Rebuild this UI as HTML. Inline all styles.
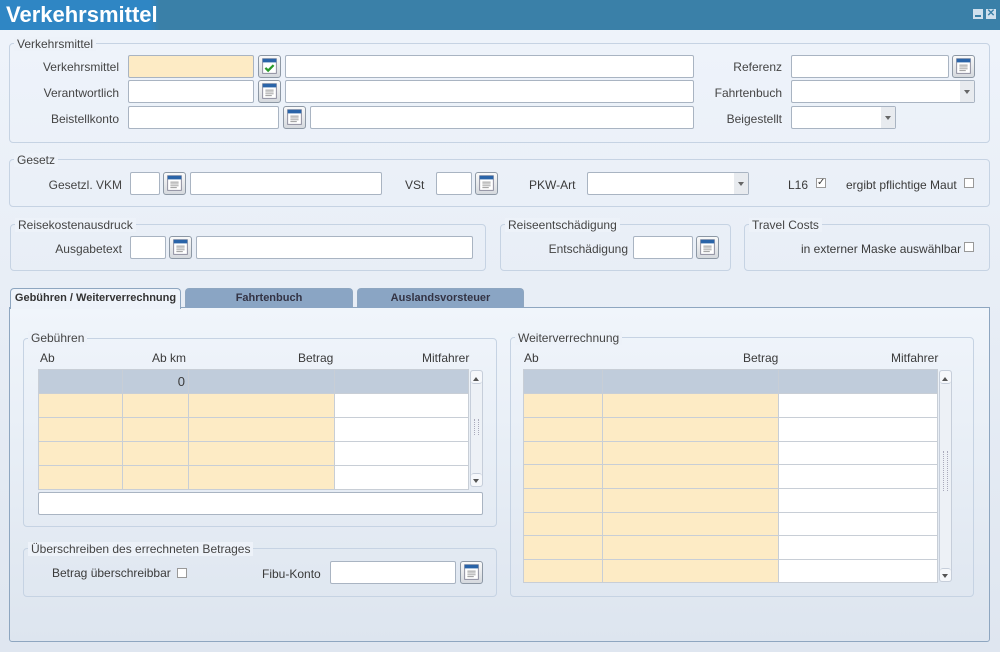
<!DOCTYPE html>
<html><head><meta charset="utf-8"><style>
*{box-sizing:border-box}
body{margin:0;width:1000px;height:652px;overflow:hidden;font-family:"Liberation Sans",sans-serif;font-size:12px;color:#3a3a3a;background:linear-gradient(#eff4fb,#dfe6f0);position:relative}
.a{position:absolute}
.tb{left:0;top:0;width:1000px;height:30px;background:linear-gradient(90deg,#2f86c4 0,#2f86c4 150px,#3a80a8 160px,#3a80a8 100%);}
.tb span{position:absolute;left:6px;top:2px;color:#fff;font-weight:bold;font-size:22px}
.g{border:1px solid #c6d3e3;border-radius:4px}
.lg{background:#edf2f9;padding:0 3px;font-size:12px;color:#444}
.in{background:#fff;border:1px solid #a9b4c2;border-radius:2px;height:23px}
.y{background:#fdebc5}
.lb{text-align:right;color:#444}
.bt{width:23px;height:23px;border:1px solid #8d98a5;border-radius:3px;background:linear-gradient(#fafafa,#d5d9de)}
.dd{position:absolute;right:0;top:0;width:14px;height:21px;background:#e8ebef}
.dd:after{content:"";position:absolute;left:4px;top:9px;border:3px solid transparent;border-top:4px solid #666}
.cb{width:10px;height:10px;border:1px solid #999;background:#fff}
.tab{height:20px;border:1px solid #8ea6c0;border-bottom:none;border-radius:4px 4px 0 0;background:#8aa5c4;font-weight:bold;font-size:11px;color:#334;text-align:center;line-height:19px}
table{border-collapse:collapse;position:absolute}
td{border:1px solid #c8ced6;padding:0}
.sb{width:13px;border:1px solid #c6ceda;border-radius:3px;background:#edf1f6}
.up,.dn{position:absolute;left:0;width:11px;height:13px;background:#f6f8fb;border-radius:3px}
.up{top:0;border-bottom:1px solid #c6ceda}.dn{bottom:0;border-top:1px solid #c6ceda}
.up:after{content:"";position:absolute;left:2px;top:3px;border:3px solid transparent;border-bottom:4px solid #555}
.dn:after{content:"";position:absolute;left:2px;top:5px;border:3px solid transparent;border-top:4px solid #555}
.gr{position:absolute;left:3px;width:5px;height:16px;border-left:1px dotted #aab;border-right:1px dotted #aab}
</style></head><body>
<div class="a tb"><span>Verkehrsmittel</span>
<div class="a" style="left:973px;top:9px;width:10px;height:10px;background:#cfe0ee"><div class="a" style="left:2px;top:6px;width:6px;height:2px;background:#3a80a8"></div></div>
<div class="a" style="left:986px;top:9px;width:10px;height:10px;background:#cfe0ee;color:#3a80a8;font-size:10px;line-height:10px;text-align:center;font-weight:bold">✕</div></div>

<svg width="0" height="0" style="position:absolute"><defs>
<g id="ic"><rect x="4" y="3" width="15" height="16" fill="#fff" stroke="#889"/><rect x="4" y="3" width="15" height="4" fill="#2a64a8"/><path d="M7 10h9M7 12h9M7 14h9M7 16h7" stroke="#999"/></g>
</defs></svg>

<div class="a g" style="left:9px;top:43px;width:981px;height:100px"></div>
<div class="a lg" style="left:14px;top:37px">Verkehrsmittel</div>
<div class="a lb" style="left:20px;top:60px;width:99px">Verkehrsmittel</div>
<div class="a in y" style="left:128px;top:55px;width:126px"></div>
<svg class="a bt" style="left:258px;top:55px" viewBox="0 0 23 23"><rect x="4" y="3" width="15" height="16" fill="#fff" stroke="#889"/><rect x="4" y="3" width="15" height="4" fill="#2a64a8"/><path d="M7 13l3 3 6-6" stroke="#2a9a2a" stroke-width="2.5" fill="none"/></svg>
<div class="a in" style="left:285px;top:55px;width:409px"></div>
<div class="a lb" style="left:20px;top:86px;width:99px">Verantwortlich</div>
<div class="a in" style="left:128px;top:80px;width:126px"></div>
<svg class="a bt" style="left:258px;top:80px" viewBox="0 0 23 23"><use href="#ic"/></svg>
<div class="a in" style="left:285px;top:80px;width:409px"></div>
<div class="a lb" style="left:20px;top:112px;width:99px">Beistellkonto</div>
<div class="a in" style="left:128px;top:106px;width:151px"></div>
<svg class="a bt" style="left:283px;top:106px" viewBox="0 0 23 23"><use href="#ic"/></svg>
<div class="a in" style="left:310px;top:106px;width:384px"></div>
<div class="a lb" style="left:700px;top:60px;width:82px">Referenz</div>
<div class="a in" style="left:791px;top:55px;width:158px"></div>
<svg class="a bt" style="left:952px;top:55px" viewBox="0 0 23 23"><use href="#ic"/></svg>
<div class="a lb" style="left:700px;top:86px;width:82px">Fahrtenbuch</div>
<div class="a in" style="left:791px;top:80px;width:184px"><div class="dd"></div></div>
<div class="a lb" style="left:700px;top:112px;width:82px">Beigestellt</div>
<div class="a in" style="left:791px;top:106px;width:105px"><div class="dd"></div></div>

<div class="a g" style="left:9px;top:159px;width:981px;height:48px"></div>
<div class="a lg" style="left:14px;top:153px">Gesetz</div>
<div class="a lb" style="left:20px;top:178px;width:102px">Gesetzl. VKM</div>
<div class="a in" style="left:130px;top:172px;width:30px"></div>
<svg class="a bt" style="left:163px;top:172px" viewBox="0 0 23 23"><use href="#ic"/></svg>
<div class="a in" style="left:190px;top:172px;width:192px"></div>
<div class="a" style="left:405px;top:178px">VSt</div>
<div class="a in" style="left:436px;top:172px;width:36px"></div>
<svg class="a bt" style="left:475px;top:172px" viewBox="0 0 23 23"><use href="#ic"/></svg>
<div class="a" style="left:529px;top:178px">PKW-Art</div>
<div class="a in" style="left:587px;top:172px;width:162px"><div class="dd"></div></div>
<div class="a" style="left:788px;top:178px">L16</div>
<div class="a cb" style="left:816px;top:178px;font-size:10px;line-height:8px;text-align:center">✓</div>
<div class="a" style="left:846px;top:178px">ergibt pflichtige Maut</div>
<div class="a cb" style="left:964px;top:178px"></div>

<div class="a g" style="left:10px;top:224px;width:476px;height:47px"></div>
<div class="a lg" style="left:15px;top:218px">Reisekostenausdruck</div>
<div class="a lb" style="left:20px;top:242px;width:102px">Ausgabetext</div>
<div class="a in" style="left:130px;top:236px;width:36px"></div>
<svg class="a bt" style="left:169px;top:236px" viewBox="0 0 23 23"><use href="#ic"/></svg>
<div class="a in" style="left:196px;top:236px;width:277px"></div>
<div class="a g" style="left:500px;top:224px;width:231px;height:47px"></div>
<div class="a lg" style="left:505px;top:218px">Reiseentschädigung</div>
<div class="a lb" style="left:520px;top:242px;width:108px">Entschädigung</div>
<div class="a in" style="left:633px;top:236px;width:60px"></div>
<svg class="a bt" style="left:696px;top:236px" viewBox="0 0 23 23"><use href="#ic"/></svg>
<div class="a g" style="left:744px;top:224px;width:246px;height:47px"></div>
<div class="a lg" style="left:749px;top:218px">Travel Costs</div>
<div class="a" style="left:801px;top:242px">in externer Maske auswählbar</div>
<div class="a cb" style="left:964px;top:242px"></div>

<div class="a" style="left:9px;top:307px;width:981px;height:335px;border:1px solid #8ea6c0;border-radius:0 0 3px 3px;background:linear-gradient(#f0f5fb,#dde5ef)"></div>
<div class="a tab" style="left:10px;top:288px;width:171px;height:21px;background:#eef3fa;color:#333">Gebühren / Weiterverrechnung</div>
<div class="a tab" style="left:185px;top:288px;width:168px">Fahrtenbuch</div>
<div class="a tab" style="left:357px;top:288px;width:167px">Auslandsvorsteuer</div>

<div class="a g" style="left:23px;top:338px;width:474px;height:189px"></div>
<div class="a lg" style="left:28px;top:331px">Gebühren</div>
<div class="a" style="left:40px;top:351px">Ab</div>
<div class="a" style="left:152px;top:351px">Ab km</div>
<div class="a" style="left:298px;top:351px">Betrag</div>
<div class="a" style="left:422px;top:351px">Mitfahrer</div>
<table style="left:38px;top:369px;width:431px">
<tr style="height:24px;background:#c0ccdb"><td style="width:84px"></td><td style="width:66px;text-align:right;padding-right:3px;font-size:13px">0</td><td style="width:146px"></td><td></td></tr>
<tr style="height:24px"><td class="y"></td><td class="y"></td><td class="y"></td><td style="background:#fff"></td></tr>
<tr style="height:24px"><td class="y"></td><td class="y"></td><td class="y"></td><td style="background:#fff"></td></tr>
<tr style="height:24px"><td class="y"></td><td class="y"></td><td class="y"></td><td style="background:#fff"></td></tr>
<tr style="height:24px"><td class="y"></td><td class="y"></td><td class="y"></td><td style="background:#fff"></td></tr>
</table>
<div class="a sb" style="left:470px;top:370px;height:117px"><div class="up"></div><div class="gr" style="top:48px"></div><div class="dn"></div></div>
<div class="a in" style="left:38px;top:492px;width:445px"></div>

<div class="a g" style="left:23px;top:548px;width:474px;height:49px"></div>
<div class="a lg" style="left:28px;top:542px">Überschreiben des errechneten Betrages</div>
<div class="a" style="left:52px;top:566px">Betrag überschreibbar</div>
<div class="a cb" style="left:177px;top:568px"></div>
<div class="a" style="left:262px;top:567px">Fibu-Konto</div>
<div class="a in" style="left:330px;top:561px;width:126px"></div>
<svg class="a bt" style="left:460px;top:561px" viewBox="0 0 23 23"><use href="#ic"/></svg>

<div class="a g" style="left:510px;top:337px;width:464px;height:260px"></div>
<div class="a lg" style="left:515px;top:331px">Weiterverrechnung</div>
<div class="a" style="left:524px;top:351px">Ab</div>
<div class="a" style="left:743px;top:351px">Betrag</div>
<div class="a" style="left:891px;top:351px">Mitfahrer</div>
<table style="left:523px;top:369px;width:415px">
<tr style="height:24px;background:#c0ccdb"><td style="width:79px"></td><td style="width:176px"></td><td></td></tr>
<tr style="height:24px"><td class="y"></td><td class="y"></td><td style="background:#fff"></td></tr>
<tr style="height:24px"><td class="y"></td><td class="y"></td><td style="background:#fff"></td></tr>
<tr style="height:23px"><td class="y"></td><td class="y"></td><td style="background:#fff"></td></tr>
<tr style="height:24px"><td class="y"></td><td class="y"></td><td style="background:#fff"></td></tr>
<tr style="height:24px"><td class="y"></td><td class="y"></td><td style="background:#fff"></td></tr>
<tr style="height:23px"><td class="y"></td><td class="y"></td><td style="background:#fff"></td></tr>
<tr style="height:24px"><td class="y"></td><td class="y"></td><td style="background:#fff"></td></tr>
<tr style="height:23px"><td class="y"></td><td class="y"></td><td style="background:#fff"></td></tr>
</table>
<div class="a sb" style="left:939px;top:370px;height:212px"><div class="up"></div><div class="gr" style="top:80px;height:40px"></div><div class="dn"></div></div>
</body></html>
